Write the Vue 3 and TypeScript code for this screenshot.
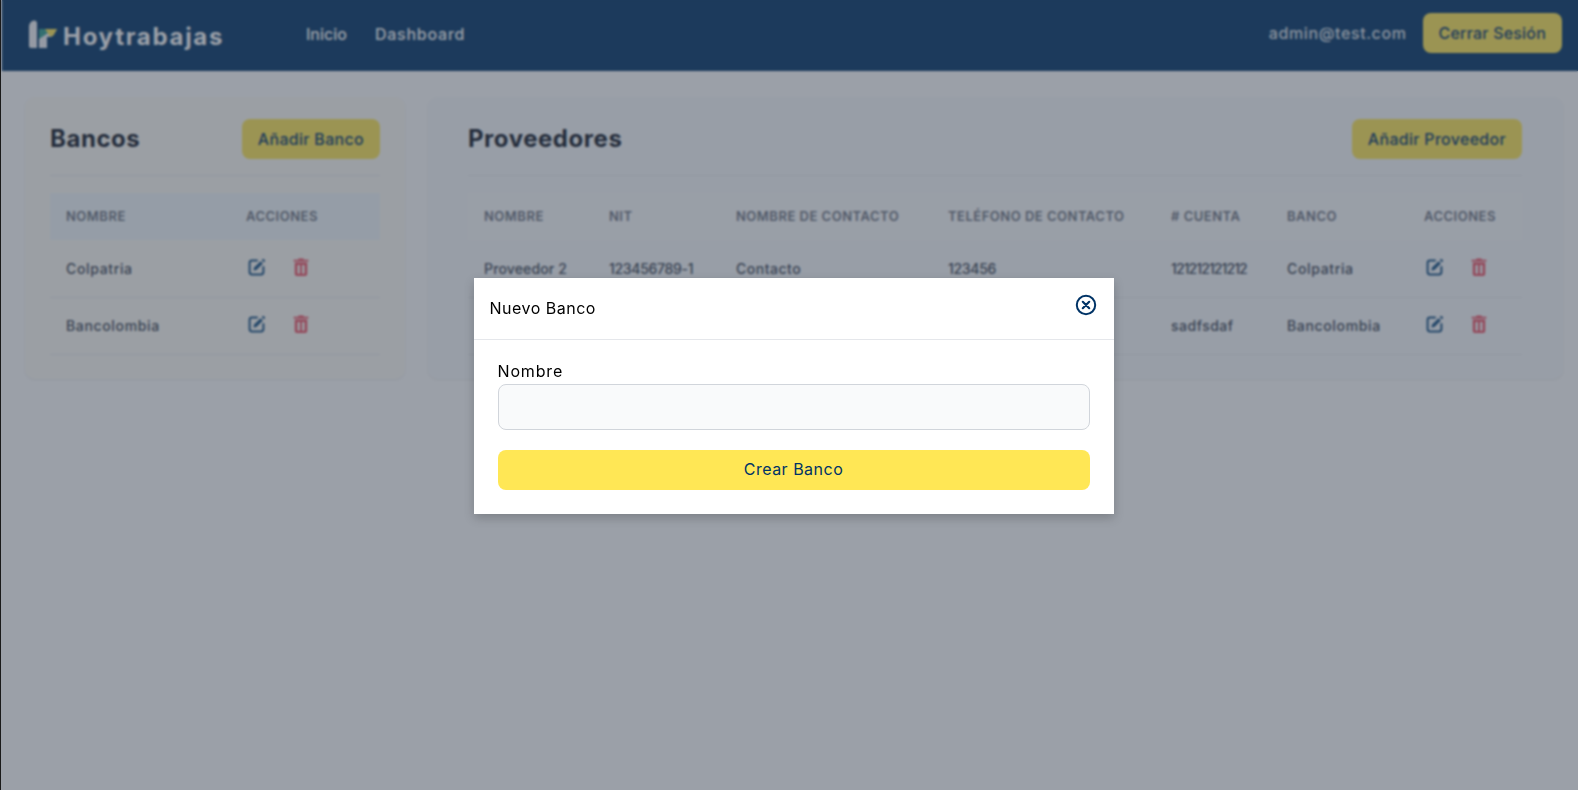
<script setup lang="ts">
const bancos = ['Colpatria', 'Bancolombia']

const proveedores = [
  { nombre: 'Proveedor 2', nit: '123456789-1', contacto: 'Contacto', telefono: '123456', cuenta: '121212121212', banco: 'Colpatria' },
  { nombre: 'Proveedor 1', nit: '987654321-0', contacto: 'Contacto 1', telefono: '654321', cuenta: 'sadfsdaf', banco: 'Bancolombia' },
]

function esNumero(valor: string) {
  return /^\d+$/.test(valor)
}
</script>

<template>
  <div class="page">
    <header class="topbar">
      <div class="brand">
        <svg class="brand-mark" width="30" height="30" viewBox="0 0 30 30">
          <path d="M1 7C1 3.5 3 1 6 0.5C8.5 0.5 9 2 9 4V28H3C1.8 28 1 27.2 1 26Z" fill="#f2f3f6" />
          <path d="M11 9H29L26 14C25 16 23.5 17 21 17H19V28H11Z" fill="#f2f3f6" />
          <path d="M11 9H26L11 19Z" fill="#2f9d8f" />
          <path d="M17 9H29L26 14.5C25 16 24 16.5 22 16.5Z" fill="#ffe755" />
        </svg>
        <span class="brand-name">Hoytrabajas</span>
      </div>
      <nav class="nav">
        <a class="inicio">Inicio</a>
        <a>Dashboard</a>
      </nav>
      <div class="user">
        <span class="email">admin@test.com</span>
        <button class="btn logout">Cerrar Sesión</button>
      </div>
    </header>

    <main class="content">
      <section class="card bancos">
        <div class="card-head">
          <h2>Bancos</h2>
          <button class="btn">Añadir Banco</button>
        </div>
        <table class="tabla tabla-bancos">
          <colgroup>
            <col style="width: 180px" />
            <col />
          </colgroup>
          <thead>
            <tr>
              <th>Nombre</th>
              <th>Acciones</th>
            </tr>
          </thead>
          <tbody>
            <tr v-for="b in bancos" :key="b">
              <td class="banco">{{ b }}</td>
              <td>
                <div class="acciones">
                  <svg class="i-edit" width="18" height="18" viewBox="0 0 18 18" fill="none">
                    <path d="M9 2.6H4C2.6 2.6 1.6 3.6 1.6 5V14C1.6 15.4 2.6 16.4 4 16.4H13C14.4 16.4 15.4 15.4 15.4 14V9" stroke="currentColor" stroke-width="2" stroke-linecap="round" />
                    <path d="M5.4 12.6L6.1 9.6L12.6 3.2L14.9 5.5L8.4 11.9Z" fill="currentColor" />
                    <path d="M13.7 2.1L14.6 1.2C15 0.8 15.5 0.8 15.9 1.2L16.8 2.1C17.2 2.5 17.2 3 16.8 3.4L15.9 4.3Z" fill="currentColor" />
                  </svg>
                  <svg class="i-trash" width="16" height="18" viewBox="0 0 16 18">
                    <path fill-rule="evenodd" fill="currentColor" d="M5.6 0.4H10.4L11 1.8H15.4V3.4H0.6V1.8H5ZM1.8 4.6H14.2V16C14.2 17.1 13.3 18 12.2 18H3.8C2.7 18 1.8 17.1 1.8 16ZM4.4 7V15.8H7V7ZM9 7V15.8H11.6V7Z" />
                  </svg>
                </div>
              </td>
            </tr>
          </tbody>
        </table>
      </section>

      <section class="card proveedores">
        <div class="card-head">
          <h2>Proveedores</h2>
          <button class="btn">Añadir Proveedor</button>
        </div>
        <table class="tabla">
          <colgroup>
            <col style="width: 125px" />
            <col style="width: 127px" />
            <col style="width: 212px" />
            <col style="width: 223px" />
            <col style="width: 116px" />
            <col style="width: 137px" />
            <col />
          </colgroup>
          <thead>
            <tr>
              <th>Nombre</th>
              <th>NIT</th>
              <th>Nombre de contacto</th>
              <th>Teléfono de contacto</th>
              <th># Cuenta</th>
              <th>Banco</th>
              <th>Acciones</th>
            </tr>
          </thead>
          <tbody>
            <tr v-for="p in proveedores" :key="p.nombre">
              <td class="nombre">{{ p.nombre }}</td>
              <td class="nit">{{ p.nit }}</td>
              <td>{{ p.contacto }}</td>
              <td class="nit">{{ p.telefono }}</td>
              <td :class="{ digitos: esNumero(p.cuenta) }">{{ p.cuenta }}</td>
              <td class="banco">{{ p.banco }}</td>
              <td>
                <div class="acciones">
                  <svg class="i-edit" width="18" height="18" viewBox="0 0 18 18" fill="none">
                    <path d="M9 2.6H4C2.6 2.6 1.6 3.6 1.6 5V14C1.6 15.4 2.6 16.4 4 16.4H13C14.4 16.4 15.4 15.4 15.4 14V9" stroke="currentColor" stroke-width="2" stroke-linecap="round" />
                    <path d="M5.4 12.6L6.1 9.6L12.6 3.2L14.9 5.5L8.4 11.9Z" fill="currentColor" />
                    <path d="M13.7 2.1L14.6 1.2C15 0.8 15.5 0.8 15.9 1.2L16.8 2.1C17.2 2.5 17.2 3 16.8 3.4L15.9 4.3Z" fill="currentColor" />
                  </svg>
                  <svg class="i-trash" width="16" height="18" viewBox="0 0 16 18">
                    <path fill-rule="evenodd" fill="currentColor" d="M5.6 0.4H10.4L11 1.8H15.4V3.4H0.6V1.8H5ZM1.8 4.6H14.2V16C14.2 17.1 13.3 18 12.2 18H3.8C2.7 18 1.8 17.1 1.8 16ZM4.4 7V15.8H7V7ZM9 7V15.8H11.6V7Z" />
                  </svg>
                </div>
              </td>
            </tr>
          </tbody>
        </table>
      </section>
    </main>

    <div class="overlay">
      <div class="modal">
        <div class="modal-head">
          <h3>Nuevo Banco</h3>
          <svg class="close" width="22" height="22" viewBox="0 0 22 22" fill="none">
            <circle cx="11" cy="11" r="9.2" stroke="currentColor" stroke-width="2" />
            <path d="M7.8 7.8L14.2 14.2M14.2 7.8L7.8 14.2" stroke="currentColor" stroke-width="2.2" stroke-linecap="round" />
          </svg>
        </div>
        <form class="modal-body" @submit.prevent>
          <label for="nombre">Nombre</label>
          <input id="nombre" type="text" />
          <button class="submit" type="submit">Crear Banco</button>
        </form>
      </div>
    </div>
  </div>
</template>

<style scoped>
.page {
  position: relative;
  min-height: 790px;
  box-sizing: border-box;
  padding-left: 1px;
  background: #fff;
  border-left: 1px solid #1a1a1a;
  font-family: Inter, "Liberation Sans", sans-serif;
  color: #1f2937;
}

.topbar {
  display: flex;
  align-items: center;
  height: 71px;
  box-sizing: border-box;
  padding: 0 16px 0 26px;
  background: #003366;
  color: #fff;
}

.brand {
  display: flex;
  align-items: center;
  gap: 5px;
  width: 278px;
}

.brand-mark {
  margin-bottom: 2px;
}

.brand-name {
  font-size: 24px;
  font-weight: 700;
  letter-spacing: 1.7px;
  padding-top: 2px;
}

.nav {
  display: flex;
  gap: 28px;
  font-size: 16px;
  font-weight: 500;
  letter-spacing: 0.75px;
  padding-bottom: 4px;
}

.inicio {
  letter-spacing: 0;
}

.user {
  display: flex;
  align-items: center;
  gap: 16px;
  margin-left: auto;
  margin-bottom: 5px;
}

.email {
  font-size: 16px;
  font-weight: 500;
  letter-spacing: 0.6px;
  color: #dfe3ea;
}

.btn {
  height: 40px;
  padding: 0 16px;
  border: 0;
  border-radius: 8px;
  background: #ffe755;
  color: #003366;
  font-family: inherit;
  font-size: 16px;
  font-weight: 500;
  letter-spacing: 0.3px;
}

.logout {
  letter-spacing: 0.2px;
}

.content {
  display: grid;
  grid-template-columns: 380px 1135px;
  gap: 23px;
  padding: 26px 0 0 23px;
}

.card {
  box-sizing: border-box;
  height: 282px;
  padding: 22px 25px 0;
  background: #fffdf7;
  border-radius: 10px;
  box-shadow: 0 1px 3px rgba(0, 0, 0, 0.08);
}

.proveedores {
  padding: 22px 41px 0 40px;
  background: #f9fbfd;
}

.card-head {
  display: flex;
  align-items: center;
  justify-content: space-between;
  height: 57px;
  margin-bottom: 17px;
  padding-bottom: 17px;
  box-sizing: border-box;
  border-bottom: 1px solid #e9ebee;
}

.card-head h2 {
  margin: 0;
  font-size: 24px;
  font-weight: 700;
  letter-spacing: 0.55px;
  color: #111827;
}

.tabla {
  width: 100%;
  border-collapse: collapse;
  table-layout: fixed;
}

.tabla th {
  height: 47px;
  padding: 0 16px 2px;
  box-sizing: border-box;
  text-align: left;
  font-size: 13px;
  font-weight: 600;
  letter-spacing: 0.5px;
  text-transform: uppercase;
  white-space: nowrap;
  color: #6b7280;
  background: #fbfcfd;
}

.tabla-bancos th {
  background: #f3f9fc;
}

.tabla td {
  height: 57px;
  padding: 0 16px;
  box-sizing: border-box;
  font-size: 14px;
  font-weight: 500;
  letter-spacing: 0.5px;
  white-space: nowrap;
  color: #374151;
  border-bottom: 1px solid #e9ebee;
}

.tabla td.nombre {
  letter-spacing: 0.15px;
}

.tabla td.banco {
  letter-spacing: 0.65px;
}

.tabla td.nit {
  letter-spacing: -0.3px;
}

.tabla td.digitos {
  letter-spacing: -0.9px;
}

.acciones {
  display: flex;
  align-items: center;
  gap: 27px;
  margin-top: -3px;
  padding-left: 2px;
}

.i-edit {
  color: #0f4c81;
}

.i-trash {
  color: #ef4f63;
}

.overlay {
  position: absolute;
  inset: 0;
  display: flex;
  align-items: center;
  justify-content: center;
  padding: 2px 0 0 8px;
  background: rgba(55, 65, 81, 0.5);
  backdrop-filter: blur(1px);
}

.modal {
  width: 640px;
  background: #fff;
  color: #000;
  box-shadow: 0 4px 10px rgba(0, 0, 0, 0.2);
}

.modal-head {
  display: flex;
  align-items: flex-start;
  justify-content: space-between;
  height: 62px;
  box-sizing: border-box;
  padding: 18px 17px 0 16px;
  border-bottom: 1px solid #e5e7eb;
}

.modal-head h3 {
  margin: 0;
  font-size: 16px;
  font-weight: 400;
  letter-spacing: 0.5px;
  line-height: 24px;
}

.close {
  margin-top: -2px;
  color: #003366;
}

.modal-body {
  display: flex;
  flex-direction: column;
  padding: 19px 24px 24px;
}

.modal-body label {
  margin-bottom: 1px;
  font-size: 16px;
  line-height: 24px;
  letter-spacing: 0.85px;
}

.modal-body input {
  height: 46px;
  box-sizing: border-box;
  margin-bottom: 20px;
  background: #f9fafb;
  border: 1px solid #d1d5db;
  border-radius: 8px;
}

.submit {
  height: 40px;
  padding: 0 0 2px;
  border: 0;
  border-radius: 8px;
  background: #ffe755;
  color: #003366;
  font-family: inherit;
  font-size: 16px;
  letter-spacing: 0.5px;
}
</style>

<style>
html,
body {
  margin: 0;
  background: #fff;
}
</style>
